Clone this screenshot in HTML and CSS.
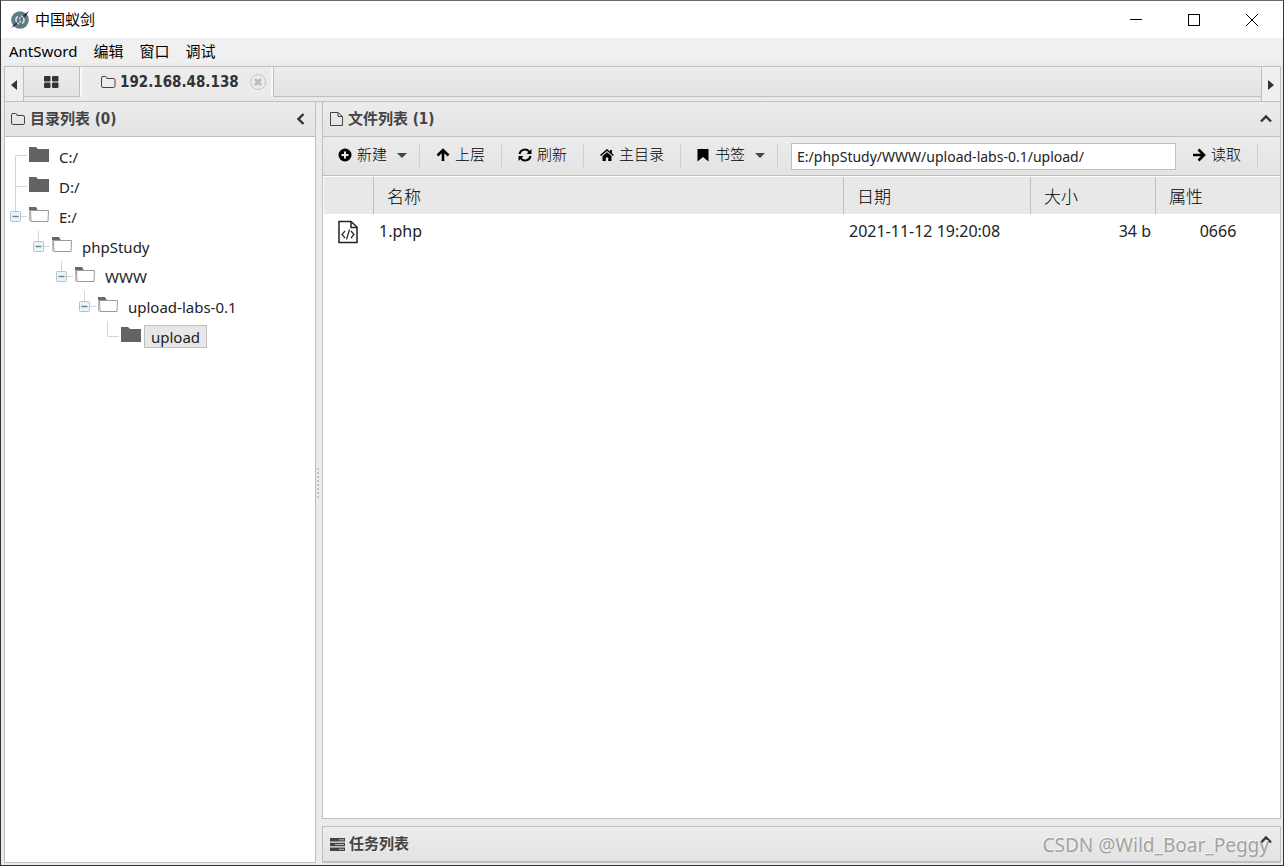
FILE: index.html
```html
<!DOCTYPE html>
<html lang="zh-CN">
<head>
    <meta charset="UTF-8">
    <meta name="viewport" content="width=device-width, initial-scale=1.0">
    <title>中国蚁剑</title>
    <link rel="stylesheet" href="styles.css">
</head>
<body>
    <div class="window">
        <header class="titlebar">
            <svg class="logo" width="20" height="20" viewBox="0 0 20 20">
                <circle cx="10" cy="10" r="8.800" fill="#5e7b87"/>
                <path d="M8 6.500Q5.500 8 6 10.500T9 14M12 13.500Q14.500 12 14 9.500T11 6" fill="none" stroke="#d5dfe3" stroke-width="1.500"/>
                <path d="M10 7.500V12.500" stroke="#d5dfe3" stroke-width="1.500"/>
                <path d="M1 18L6 12.500L7.500 14ZM19 1L13 5.500L15 7.500Z" fill="#222d33"/>
                <path d="M3 16L17 3.500" stroke="#2d3b42" stroke-width=".8"/>
            </svg>
            <span class="app-name">中国蚁剑</span>
            <button class="win-btn" aria-label="最小化">
                <svg width="14" height="14" viewBox="0 0 14 14"><path d="M1 6.5H13" stroke="#000"/></svg>
            </button>
            <button class="win-btn" aria-label="最大化">
                <svg width="14" height="14" viewBox="0 0 14 14"><rect x="1.5" y="1.5" width="11" height="11" fill="none" stroke="#000"/></svg>
            </button>
            <button class="win-btn" aria-label="关闭">
                <svg width="14" height="14" viewBox="0 0 14 14"><path d="M1 1L13 13M13 1L1 13" stroke="#000"/></svg>
            </button>
        </header>

        <nav class="menubar">
            <button>AntSword</button>
            <button>编辑</button>
            <button>窗口</button>
            <button>调试</button>
        </nav>

        <main class="workspace">
            <div class="tabbar">
                <button class="tab-arrow left" aria-label="向左">
                    <svg width="6" height="10" viewBox="0 0 6 10"><path d="M6 0V10L0 5Z" fill="#333"/></svg>
                </button>
                <div class="tabs">
                    <button class="tab home" aria-label="主页">
                        <svg width="15" height="12" viewBox="0 0 15 12" fill="#333">
                            <rect width="6.500" height="5.500" rx="1"/><rect x="8" width="6.500" height="5.500" rx="1"/>
                            <rect y="6.500" width="6.500" height="5.500" rx="1"/><rect x="8" y="6.500" width="6.500" height="5.500" rx="1"/>
                        </svg>
                    </button>
                    <div class="tab active">
                        <svg width="16" height="14" viewBox="0 0 16 14"><path d="M.5 11V3Q.5 1.500 2 1.500H4.500Q6 1.500 6 3.500H12.500Q14 3.500 14 5V11Q14 12.500 12.500 12.500H2Q.5 12.500 .5 11Z" fill="none" stroke="#444"/></svg>
                        <span>192.168.48.138</span>
                        <button class="tab-close" aria-label="关闭标签">
                            <svg width="18" height="18" viewBox="0 0 18 18"><circle cx="9" cy="9" r="7.5" fill="none" stroke="#c6c6c6"/><path d="M6 6L12 12M12 6L6 12" stroke="#bcbcbc" stroke-width="2.6"/></svg>
                        </button>
                    </div>
                    <div class="tab-space"></div>
                </div>
                <button class="tab-arrow right" aria-label="向右">
                    <svg width="6" height="10" viewBox="0 0 6 10"><path d="M0 0V10L6 5Z" fill="#333"/></svg>
                </button>
            </div>

            <div class="panels">
                <section class="panel sidebar">
                    <div class="panel-head">
                        <svg width="15" height="14" viewBox="0 0 15 14"><path d="M.5 11V3Q.5 1.500 2 1.500H4.500Q6 1.500 6 3.500H12Q13.500 3.500 13.500 5V11Q13.500 12.500 12 12.500H2Q.5 12.500 .5 11Z" fill="none" stroke="#444"/></svg>
                        <h2>目录列表 (0)</h2>
                        <button class="collapse" aria-label="收起目录列表">
                            <svg width="12" height="12" viewBox="0 0 12 12"><path d="M8.500 1L3.500 6L8.500 11" fill="none" stroke="#333" stroke-width="2.4"/></svg>
                        </button>
                    </div>
                    <ul class="tree" id="tree"></ul>
                </section>

                <div class="splitter">
                    <svg width="4" height="30" viewBox="0 0 4 30"><path d="M1 0V30" stroke="#c4c4c4" stroke-width="2" stroke-dasharray="2 2"/></svg>
                </div>

                <div class="content">
                    <section class="panel files">
                        <div class="panel-head">
                            <svg width="15" height="16" viewBox="0 0 15 16"><path d="M1.500 1.500H9L13.500 5.500V14.500H1.500ZM9 1.500V5.500H13.500" fill="none" stroke="#444"/></svg>
                            <h2>文件列表 (1)</h2>
                            <button class="collapse" aria-label="收起文件列表">
                                <svg width="12" height="12" viewBox="0 0 12 12"><path d="M1 8.500L6 3.500L11 8.500" fill="none" stroke="#333" stroke-width="2.400"/></svg>
                            </button>
                        </div>

                        <div class="toolbar">
                            <button class="tool dropdown">
                                <svg width="14" height="14" viewBox="0 0 14 14"><circle cx="7" cy="7" r="6.500"/><path d="M7 3.500V10.500M3.500 7H10.500" stroke="#ebebeb" stroke-width="2"/></svg>
                                <span>新建</span>
                                <svg class="caret" width="10" height="5" viewBox="0 0 10 5"><path d="M0 0H10L5 5Z" fill="#444"/></svg>
                            </button>
                            <button class="tool">
                                <svg width="14" height="14" viewBox="0 0 14 14"><path d="M7 13V3M1.500 7.500L7 2L12.500 7.500" fill="none" stroke="#000" stroke-width="2.600"/></svg>
                                <span>上层</span>
                            </button>
                            <button class="tool">
                                <svg width="14" height="14" viewBox="0 0 14 14"><path d="M1.500 6A5.500 5.500 0 0 1 11.500 4M12.500 8A5.500 5.500 0 0 1 2.500 10" fill="none" stroke="#000" stroke-width="2"/><path d="M13.500 1V6H8.500ZM.5 13V8H5.500Z"/></svg>
                                <span>刷新</span>
                            </button>
                            <button class="tool">
                                <svg width="14" height="14" viewBox="0 0 14 14"><path d="M.5 7.500L7 2L13.500 7.500" fill="none" stroke="#000" stroke-width="1.600"/><path d="M10 2H12V6L10 4.500ZM2.500 8L7 4.300L11.500 8V13H8.200V9.500H5.800V13H2.500Z"/></svg>
                                <span>主目录</span>
                            </button>
                            <button class="tool dropdown">
                                <svg width="14" height="14" viewBox="0 0 14 14"><path d="M1.500 1H12.500V13.500L7 9L1.500 13.500Z"/></svg>
                                <span>书签</span>
                                <svg class="caret" width="10" height="5" viewBox="0 0 10 5"><path d="M0 0H10L5 5Z" fill="#444"/></svg>
                            </button>
                            <input type="text" class="path" id="path" aria-label="路径" value="E:/phpStudy/WWW/upload-labs-0.1/upload/">
                            <button class="tool">
                                <svg width="14" height="14" viewBox="0 0 14 14"><path d="M1 7H11M6.500 1.500L12 7L6.500 12.500" fill="none" stroke="#000" stroke-width="2.600"/></svg>
                                <span>读取</span>
                            </button>
                        </div>

                        <table class="file-table">
                            <thead>
                                <tr>
                                    <th class="col-icon"></th>
                                    <th>名称</th>
                                    <th class="col-date">日期</th>
                                    <th class="col-size">大小</th>
                                    <th class="col-attr">属性</th>
                                </tr>
                            </thead>
                            <tbody>
                                <tr>
                                    <td class="col-icon">
                                        <svg width="20" height="24" viewBox="0 0 20 24" fill="none" stroke="#222">
                                            <path d="M1 1.500H13L19 7V22.500H1Z" stroke-width="1.500"/>
                                            <path d="M13 1.500V7.500H19" stroke-width="1.500"/>
                                            <path d="M7 11L4 14.500L7 18M13 11L16 14.500L13 18M11.500 9.500L8.500 19.500" stroke-width="1.200"/>
                                        </svg>
                                    </td>
                                    <td>1.php</td>
                                    <td>2021-11-12 19:20:08</td>
                                    <td class="size">34 b</td>
                                    <td class="attr">0666</td>
                                </tr>
                            </tbody>
                        </table>
                    </section>

                    <section class="panel tasks">
                        <div class="panel-head">
                            <svg width="16" height="13" viewBox="0 0 16 13"><path d="M1 0H16V3.500H1ZM1 4.700H16V8.200H1ZM1 9.500H16V13H1Z" fill="#444"/><path d="M10 1.800H15M6 6.500H15M10 11.300H15" stroke="#bbb"/></svg>
                            <h2>任务列表</h2>
                            <button class="collapse" aria-label="展开任务列表">
                                <svg width="12" height="20" viewBox="0 0 12 20"><path d="M1 8.500L6 3.500L11 8.500" fill="none" stroke="#333" stroke-width="2.400"/></svg>
                            </button>
                        </div>
                    </section>
                </div>
            </div>
        </main>
        <div class="watermark">CSDN @Wild_Boar_Peggy</div>
    </div>

    <script>
        // Directory tree: line is the connector drawn in front of the folder
        const tree = [
            { name: 'C:/', line: 'first' },
            { name: 'D:/', line: 'middle' },
            { name: 'E:/', line: 'open', children: [
                { name: 'phpStudy', line: 'open', children: [
                    { name: 'WWW', line: 'open', children: [
                        { name: 'upload-labs-0.1', line: 'open', children: [
                            { name: 'upload', line: 'last', selected: true }
                        ] }
                    ] }
                ] }
            ] }
        ];

        const box = '<rect x="5.5" y="10.5" width="10" height="10" rx="1" fill="#eef3f6" stroke="#b4c3cc"/><path d="M7.500 15.500H13.500" stroke="#5b8299" stroke-width="1.400"/>';
        const lines = {
            first: '<path d="M22 14.500H10.500V30" fill="none" stroke="#d6d6d6"/>',
            middle: '<path d="M10.500 0V30M10.500 15.500H22" fill="none" stroke="#d6d6d6"/>',
            last: '<path d="M10.500 0V15.500H22" fill="none" stroke="#d6d6d6"/>',
            open: '<path d="M10.500 0V10M16 15.500H22" fill="none" stroke="#d6d6d6"/>' + box
        };
        const closedFolder = '<path d="M0 1H7L9 3H20V16H0Z" fill="#636363"/>';
        const openFolder = '<path d="M0 4.500V1H7L9 4.500Z" fill="#686868"/><path d="M.5 4V15.500" stroke="#bbb"/><path d="M1.500 4.500H19.500L19 15.500H2Z" fill="#fff" stroke="#999"/>';

        function renderNodes(nodes, parent) {
            nodes.forEach(node => {
                const li = document.createElement('li');
                li.innerHTML = `<div class="node">
                    <svg width="24" height="30" viewBox="0 0 24 30">${lines[node.line]}</svg>
                    <svg width="20" height="18" viewBox="0 1 20 18">${node.children ? openFolder : closedFolder}</svg>
                    <span class="node-name${node.selected ? ' selected' : ''}">${node.name}</span>
                </div>`;
                if (node.children) {
                    const ul = document.createElement('ul');
                    renderNodes(node.children, ul);
                    li.appendChild(ul);
                }
                parent.appendChild(li);
            });
        }

        renderNodes(tree, document.getElementById('tree'));
    </script>
</body>
</html>
```

FILE: styles.css
```css
* {
    box-sizing: border-box;
}

body {
    margin: 0;
    font-family: "Noto Sans", "Noto Sans CJK SC", sans-serif;
    font-size: 16px;
    color: #222;
}

button {
    font-family: inherit;
    font-size: 15px;
    color: #000;
    background: none;
    border: none;
    padding: 0;
    display: flex;
    align-items: center;
}

svg {
    display: block;
    flex: none;
}

.window {
    position: relative;
    display: flex;
    flex-direction: column;
    height: 100vh;
    border: 1px solid #333;
    border-top-color: #706b6b;
    background-color: #ebebeb;
}

.titlebar {
    display: flex;
    align-items: center;
    height: 37px;
    padding: 0 2px 0 9px;
    background-color: #fff;
}

.app-name {
    flex: 1;
    margin-left: 5px;
    padding-bottom: 2px;
    font-size: 15px;
    color: #000;
}

.win-btn {
    width: 58px;
    height: 36px;
    justify-content: center;
}

.menubar {
    display: flex;
    gap: 16px;
    height: 25px;
    padding-left: 8px;
    background-color: #f0f0f0;
}

.workspace {
    flex: 1;
    display: flex;
    flex-direction: column;
    min-height: 0;
    padding: 3px 2px 2px 3px;
}

/* Tabs */
.tabbar {
    display: flex;
    height: 35px;
    border: 1px solid #bfbfbf;
    border-bottom: none;
    background-color: #e9e9e9;
}

.tab-arrow {
    width: 19px;
    justify-content: center;
    padding-top: 2px;
    background-color: #efefef;
}

.tab-arrow.left {
    border-right: 1px solid #bfbfbf;
}

.tab-arrow.right {
    border-left: 1px solid #bfbfbf;
}

.tabs {
    flex: 1;
    display: flex;
    height: 30px;
    background: linear-gradient(#ececec, #e3e3e3);
}

.tab {
    display: flex;
    align-items: center;
    border-right: 1px solid #bfbfbf;
}

.tab.home {
    width: 56px;
    justify-content: center;
    border-bottom: 1px solid #bfbfbf;
}

.tab.active {
    width: 194px;
    padding-left: 19px;
    border-left: 2px solid #f8f8f8;
    box-shadow: inset -2px 0 #f8f8f8;
    background-color: #ebebeb;
    font-family: "DejaVu Sans Condensed", "DejaVu Sans", sans-serif;
    font-size: 15px;
    font-weight: bold;
    color: #333;
}

.tab.active span {
    margin: 0 10px 0 3px;
}

.tab-space {
    flex: 1;
    border-bottom: 1px solid #bfbfbf;
}

/* Panels */
.panels {
    flex: 1;
    display: flex;
    min-height: 0;
}

.panel {
    border: 1px solid #bfbfbf;
    background-color: #fff;
}

.panel-head {
    display: flex;
    align-items: center;
    height: 35px;
    padding: 0 8px 0 6px;
    border-bottom: 1px solid #bfbfbf;
    background: linear-gradient(#ececec, #e3e3e3);
}

.panel-head h2 {
    flex: 1;
    margin: 0 0 0 4px;
    padding-bottom: 4px;
    font-family: "DejaVu Sans Condensed", "DejaVu Sans", "Noto Sans CJK SC", sans-serif;
    font-size: 15px;
    font-weight: bold;
    color: #444;
}

.sidebar {
    width: 312px;
}

.splitter {
    display: flex;
    align-items: center;
    justify-content: center;
    width: 6px;
    border-top: 1px solid #bfbfbf;
}

.content {
    flex: 1;
    display: flex;
    flex-direction: column;
    gap: 7px;
    min-width: 0;
}

.files {
    flex: 1;
}

/* Tree */
.tree {
    padding-top: 4px;
    font-size: 15px;
}

.tree, .tree ul {
    margin: 0;
    padding-left: 0;
    list-style: none;
}

.tree ul {
    padding-left: 23px;
}

.node {
    display: flex;
    align-items: center;
    height: 30px;
}

.node-name {
    margin-left: 3px;
    padding: 1px 6px 0;
    border: 1px solid transparent;
    line-height: 20px;
}

.node-name.selected {
    border-color: #bfbfbf;
    background-color: #e7e7e7;
}

/* Toolbar */
.toolbar {
    display: flex;
    align-items: center;
    height: 39px;
    padding-right: 22px;
    border-bottom: 1px solid #bfbfbf;
    background: linear-gradient(#ececec, #e3e3e3);
}

.tool {
    height: 25px;
    padding: 0 16px 2px;
    gap: 5px;
    border-right: 1px solid #c5d3dc;
    font-weight: 300;
    white-space: nowrap;
}

.tool span {
    padding-bottom: 3px;
}

.tool.dropdown {
    padding: 0 12px 2px 15px;
}

.caret {
    margin-left: 5px;
}

.path {
    flex: 1;
    min-width: 0;
    height: 27px;
    margin: 0 0 0 13px;
    padding: 0 5px;
    border: 1px solid #bfbfbf;
    font-family: inherit;
    font-size: 14px;
    color: #222;
}

/* File list */
.file-table {
    width: 100%;
    border: 1px solid #fff;
    border-width: 1px 0 0 1px;
    border-collapse: separate;
    border-spacing: 0;
    table-layout: fixed;
}

.file-table th {
    height: 37px;
    padding: 0 0 1px 13px;
    border-right: 1px solid #bfbfbf;
    background-color: #e8e8e8;
    font-size: 17px;
    font-weight: 300;
    text-align: left;
    color: #000;
}

.file-table th:last-child {
    border-right: none;
}

.file-table td {
    height: 35px;
    padding: 0 5px 1px;
}

.file-table .col-icon {
    width: 50px;
    padding: 0 14px;
}

.col-date {
    width: 187px;
}

.col-size {
    width: 125px;
}

.col-attr {
    width: 124px;
}

.file-table .size {
    text-align: right;
}

.file-table .attr {
    text-align: center;
}

/* Watermark */
.watermark {
    position: absolute;
    right: 14px;
    bottom: 6px;
    font-size: 19px;
    line-height: 28px;
    color: #a2a2a2;
    text-shadow: -1px -1px #f6f6f6;
    pointer-events: none;
}
```
